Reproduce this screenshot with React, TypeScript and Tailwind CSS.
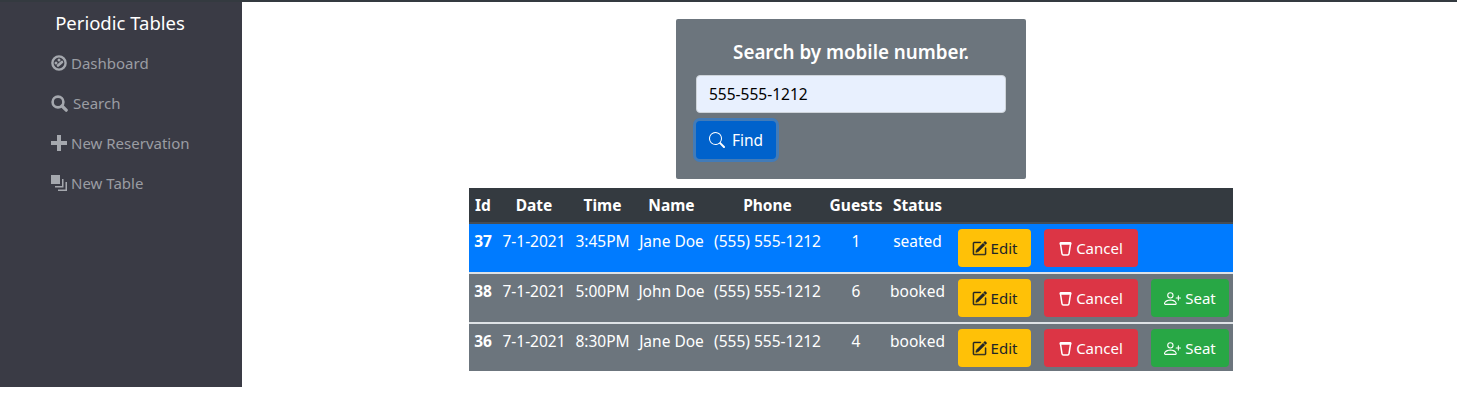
import React from 'react';
import { BsPersonPlus, BsPencilSquare, BsSearch } from 'react-icons/bs';

const font = "font-['Noto_Sans','Open_Sans',sans-serif]";

interface Row {
  id: number;
  time: string;
  name: string;
  guests: number;
  status: string;
}

const rows: Row[] = [
  { id: 37, time: '3:45PM', name: 'Jane Doe', guests: 1, status: 'seated' },
  { id: 38, time: '5:00PM', name: 'John Doe', guests: 6, status: 'booked' },
  { id: 36, time: '8:30PM', name: 'Jane Doe', guests: 4, status: 'booked' },
];

const TrashCup = () => (
  <svg width="13" height="15" viewBox="0 0 14 16" fill="none" stroke="currentColor">
    <path d="M2 2.5h10" strokeWidth="3" strokeLinecap="round" />
    <path d="M1.6 3l1.6 10.6c.1.8.7 1.4 1.5 1.4h4.6c.8 0 1.4-.6 1.5-1.4L12.4 3" strokeWidth="1.6" />
  </svg>
);

const DashIcon = () => (
  <svg width="16" height="16" viewBox="0 0 16 16" fill="none">
    <circle cx="8" cy="8" r="6.6" stroke="currentColor" strokeWidth="2.4" />
    <circle cx="5" cy="8" r="1.5" fill="currentColor" />
    <circle cx="8" cy="5" r="1.5" fill="currentColor" />
    <path d="M7 10.5l4-3.5" stroke="currentColor" strokeWidth="2.6" strokeLinecap="round" />
  </svg>
);

const SearchIcon = () => (
  <svg width="17" height="17" viewBox="0 0 17 17" fill="none" stroke="currentColor">
    <circle cx="7" cy="7" r="5.4" strokeWidth="2.6" />
    <path d="M11 11l4.2 4.2" strokeWidth="3.2" strokeLinecap="round" />
  </svg>
);

const PlusIcon = () => (
  <svg width="16" height="16" viewBox="0 0 16 16" fill="currentColor">
    <path d="M6 0h4v6h6v4h-6v6H6v-6H0V6h6z" />
  </svg>
);

const LayersIcon = () => (
  <svg width="16" height="16" viewBox="0 0 16 16" fill="currentColor">
    <path d="M0 0h9v9H0z" />
    <path d="M11 4h1.5v8.5H4V11h7z" />
    <path d="M14.5 7H16v9H7v-1.5h7.5z" />
  </svg>
);

const navItems = [
  { label: 'Dashboard', icon: <DashIcon />, gap: 'gap-1' },
  { label: 'Search', icon: <SearchIcon />, gap: 'gap-[5px]' },
  { label: 'New Reservation', icon: <PlusIcon />, gap: 'gap-1' },
  { label: 'New Table', icon: <LayersIcon />, gap: 'gap-1' },
];

const ActionButton = ({ className, children }: { className: string; children: React.ReactNode }) => (
  <button className={`h-[38px] rounded flex items-center justify-center gap-1 text-[15px] ${className}`}>{children}</button>
);

const App = () => {
  return (
    <div className={`h-[411px] bg-white border-t-2 border-[#343a40] overflow-hidden ${font} text-[15.5px] leading-6`}>
      <div className="flex">
        {/* Sidebar */}
        <nav className="w-[242px] h-[385px] shrink-0 bg-[#3a3b45]">
          <h1 className="text-white text-[18.5px] leading-6 text-center pt-[9px] pr-[2px] mb-[8px]">Periodic Tables</h1>
          <ul className="pl-[51px] text-[#9a9da3] text-[15px]">
            {navItems.map((item) => (
              <li key={item.label} className={`h-10 flex items-center ${item.gap}`}>
                <span className="text-[#a5a8ae]">{item.icon}</span>
                {item.label}
              </li>
            ))}
          </ul>
        </nav>

        {/* Main column */}
        <main className="flex-1 flex flex-col items-center pt-[17px] pl-[3px]">
          <div className="w-[350px] h-[160px] rounded-xs bg-[#6c757d] px-5 pt-[19px]">
            <h2 className="text-white text-[18.8px] leading-7 font-semibold text-center">Search by mobile number.</h2>
            <input
              readOnly
              value="555-555-1212"
              className="block w-full h-[38px] mt-[9px] px-3 rounded bg-[#e8f0fe] border border-[#ced4da] text-black outline-none"
            />
            <button className="mt-2 w-[80px] h-[38px] rounded bg-[#0062cc] text-white flex items-center justify-center gap-[7px] ring-[3px] ring-[#267fe0]/60">
              <BsSearch size={16} />
              Find
            </button>
          </div>

          <table className="mt-[9px] w-[764px] table-fixed border-collapse text-white">
            <colgroup>
              <col className="w-[28px]" />
              <col className="w-[74px]" />
              <col className="w-[63px]" />
              <col className="w-[75px]" />
              <col className="w-[117px]" />
              <col className="w-[60px]" />
              <col className="w-[63px]" />
              <col className="w-[88px]" />
              <col className="w-[113px]" />
              <col className="w-[83px]" />
            </colgroup>
            <thead>
              <tr className="h-[35px] bg-[#343a40] font-bold">
                <th>Id</th>
                <th>Date</th>
                <th>Time</th>
                <th>Name</th>
                <th>Phone</th>
                <th>Guests</th>
                <th>Status</th>
                <th />
                <th />
                <th />
              </tr>
            </thead>
            <tbody>
              {rows.map((row, i) => (
                <tr
                  key={row.id}
                  className={`${i === 2 ? 'h-[48px]' : 'h-[50px]'} border-t-2 ${i === 0 ? 'bg-[#007bff] border-[#454d55]' : 'bg-[#6c757d] border-[#dee2e6]'}`}
                >
                  <th className="align-top pt-[5px]">{row.id}</th>
                  <td className="align-top text-center pt-[5px]">7-1-2021</td>
                  <td className="align-top text-center pt-[5px]">{row.time}</td>
                  <td className="align-top text-center pt-[5px]">{row.name}</td>
                  <td className="align-top text-center pt-[5px]">(555) 555-1212</td>
                  <td className="align-top text-center pt-[5px]">{row.guests}</td>
                  <td className="align-top text-center pt-[5px]">{row.status}</td>
                  <td className="align-top pt-[5px] pl-[9px]">
                    <ActionButton className="w-[73px] bg-[#ffc107] text-[#212529]">
                      <BsPencilSquare size={15} strokeWidth={0.5} />
                      Edit
                    </ActionButton>
                  </td>
                  <td className="align-top pt-[5px] pl-[7px]">
                    <ActionButton className="w-[94px] bg-[#dc3545] text-white">
                      <TrashCup />
                      Cancel
                    </ActionButton>
                  </td>
                  <td className="align-top pt-[5px] pl-[1px]">
                    {row.status === 'booked' && (
                      <ActionButton className="w-[78px] bg-[#28a745] text-white">
                        <BsPersonPlus size={17} />
                        Seat
                      </ActionButton>
                    )}
                  </td>
                </tr>
              ))}
            </tbody>
          </table>
        </main>
      </div>
    </div>
  );
};

export default App;
